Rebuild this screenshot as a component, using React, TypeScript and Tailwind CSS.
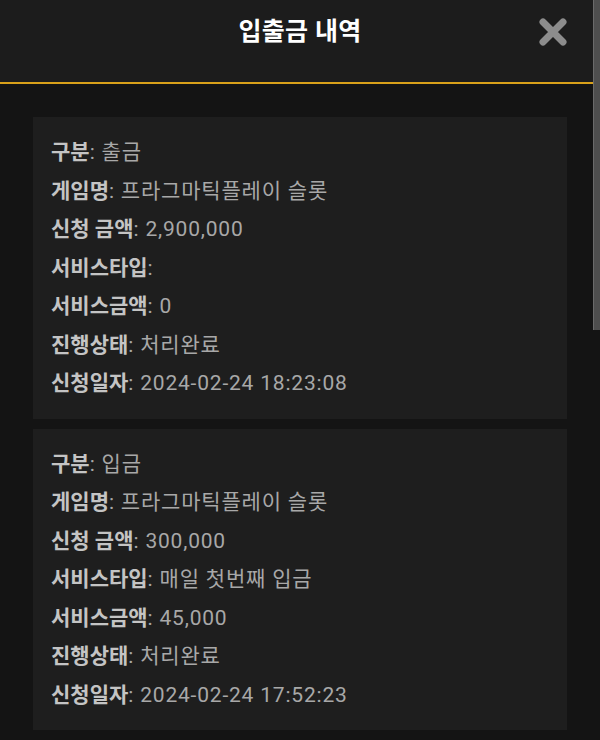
const records = [
  {
    type: "출금",
    game: "프라그마틱플레이 슬롯",
    amount: "2,900,000",
    serviceType: "",
    serviceAmount: "0",
    status: "처리완료",
    date: "2024-02-24 18:23:08",
  },
  {
    type: "입금",
    game: "프라그마틱플레이 슬롯",
    amount: "300,000",
    serviceType: "매일 첫번째 입금",
    serviceAmount: "45,000",
    status: "처리완료",
    date: "2024-02-24 17:52:23",
  },
];

function Row({ label, value }: { label: string; value: string }) {
  return (
    <div className="whitespace-nowrap">
      <span className="font-bold text-[#c4c4c4]">{label}</span>
      <span className="tracking-[0.8px] text-[#a8a8a8]">:{value ? ` ${value}` : ""}</span>
    </div>
  );
}

export default function App() {
  return (
    <div
      className="relative h-[740px] w-[600px] overflow-hidden bg-[#141414]"
      style={{ fontFamily: "Roboto, 'Noto Sans CJK KR', sans-serif" }}
    >
      {/* Header */}
      <header className="relative flex h-[84px] items-center justify-center border-b-2 border-[#d9a11a] bg-[#1c1c1c] pb-[18px]">
        <h1 className="text-[25px] font-bold tracking-[0.3px] text-white">입출금 내역</h1>
        <button className="absolute top-[17px] right-[32px] text-[#8c8c8c]">
          <svg width="30" height="30" viewBox="0 0 30 30" fill="none">
            <path
              d="M5 5L25 25M25 5L5 25"
              stroke="currentColor"
              strokeWidth="7"
              strokeLinecap="round"
            />
          </svg>
        </button>
      </header>

      {/* List */}
      <div className="flex flex-col gap-[10px] px-[33px] pt-[33px] text-[21px] leading-[38.5px]">
        {records.map((r, i) => (
          <div key={i} className="bg-[#1e1e1e] px-[18px] py-[16px]">
            <Row label="구분" value={r.type} />
            <Row label="게임명" value={r.game} />
            <Row label="신청 금액" value={r.amount} />
            <Row label="서비스타입" value={r.serviceType} />
            <Row label="서비스금액" value={r.serviceAmount} />
            <Row label="진행상태" value={r.status} />
            <Row label="신청일자" value={r.date} />
          </div>
        ))}
      </div>

      {/* Scrollbar thumb */}
      <div className="absolute top-0 right-0 h-[330px] w-[7px] border-l border-[#6a6a6a] bg-[#4e4e4e]" />
    </div>
  );
}
